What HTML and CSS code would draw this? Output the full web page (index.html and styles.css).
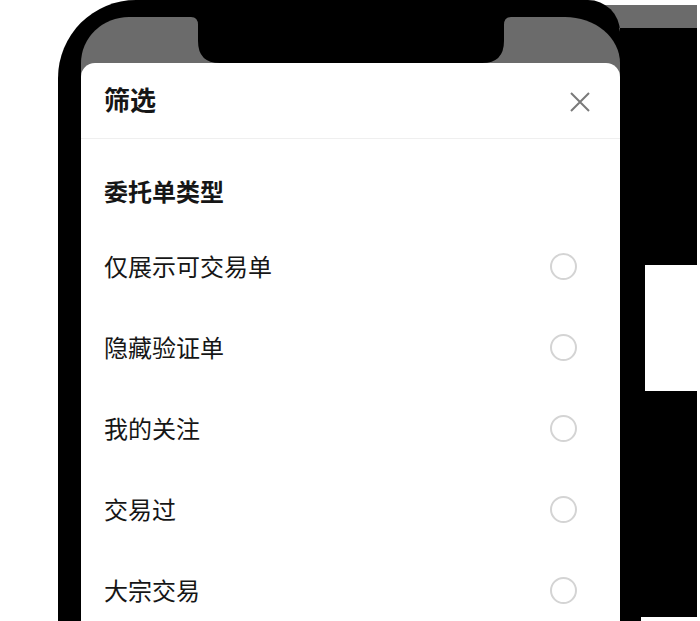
FILE: index.html
```html
<!DOCTYPE html>
<html lang="zh-CN">
<head>
  <meta charset="UTF-8">
  <meta name="viewport" content="width=device-width, initial-scale=1.0">
  <title>筛选</title>
  <link rel="stylesheet" href="styles.css">
</head>
<body>
  <div class="device">
    <div class="phone">
      <div class="screen">
        <div class="status-bar">
          <svg class="notch" width="320" height="46" viewBox="0 0 320 46">
            <path d="M0 0 Q7 0 7 8 V24 Q7 46 29 46 H291 Q313 46 313 24 V8 Q313 0 320 0 Z" fill="#000"/>
          </svg>
        </div>
        <div class="sheet">
          <div class="sheet-header">
            <span class="sheet-title">筛选</span>
            <button type="button" class="close-btn" aria-label="关闭">
              <svg width="20" height="20" viewBox="0 0 20 20">
                <path d="M1 1 L19 19 M19 1 L1 19" stroke="#7a7a7a" stroke-width="2" fill="none"/>
              </svg>
            </button>
          </div>
          <div class="section-title">委托单类型</div>
          <ul class="option-list">
            <li class="option-row"><span>仅展示可交易单</span><span class="radio"></span></li>
            <li class="option-row"><span>隐藏验证单</span><span class="radio"></span></li>
            <li class="option-row"><span>我的关注</span><span class="radio"></span></li>
            <li class="option-row"><span>交易过</span><span class="radio"></span></li>
            <li class="option-row"><span>大宗交易</span><span class="radio"></span></li>
          </ul>
        </div>
      </div>
    </div>
    <div class="side">
      <div class="side-window"></div>
    </div>
  </div>
</body>
</html>
```

FILE: styles.css
```css
html, body {
  margin: 0;
  height: 621px;
  overflow: hidden;
  background: #fff;
}
body {
  font-family: "Noto Sans CJK SC", "Noto Sans", sans-serif;
  color: #161616;
}
.device {
  position: relative;
  display: flex;
  margin-left: 58px;
  width: 639px;
  height: 621px;
}
/* grey strip peeking out behind the top-right corner */
.device::before {
  content: "";
  position: absolute;
  left: 542px;
  top: 5px;
  width: 97px;
  height: 23px;
  background: #6b6b6b;
}
.phone {
  position: relative;
  z-index: 1;
  display: flex;
  width: 562px;
  height: 621px;
  box-sizing: border-box;
  padding: 17px 0 0 23px;
  background: #000;
  border-radius: 78px 32px 0 0;
}
.screen {
  flex: 1;
  display: flex;
  flex-direction: column;
  background: #6b6b6b;
  border-radius: 48px 55px 0 0 / 46px 46px 0 0;
  overflow: hidden;
}
.status-bar {
  height: 46px;
  flex-shrink: 0;
  display: flex;
  justify-content: center;
}
.notch {
  display: block;
}
.sheet {
  flex: 1;
  background: #fff;
  border-radius: 14px 14px 0 0;
}
.sheet-header {
  height: 75px;
  display: flex;
  align-items: center;
  justify-content: space-between;
  padding: 0 30px 0 23px;
  border-bottom: 1px solid #efefef;
}
.sheet-title {
  font-size: 26px;
  font-weight: 700;
  line-height: 30px;
  margin-bottom: 4px;
}
.close-btn {
  border: none;
  background: none;
  padding: 0;
  margin-top: 3px;
  width: 20px;
  height: 20px;
  cursor: pointer;
}
.close-btn svg {
  display: block;
}
.section-title {
  padding: 38px 23px 22px;
  font-size: 24px;
  font-weight: 700;
  line-height: 28px;
}
.option-list {
  list-style: none;
  margin: 0;
  padding: 0;
}
.option-row {
  height: 81px;
  box-sizing: border-box;
  display: flex;
  align-items: center;
  justify-content: space-between;
  padding: 0 43px 4px 23px;
  font-size: 24px;
  line-height: 28px;
}
.radio {
  width: 23px;
  height: 23px;
  border: 2px solid #d4d4d4;
  border-radius: 50%;
  margin-top: 2px;
}
.side {
  position: relative;
  width: 77px;
  margin-top: 28px;
  background: #000;
}
.side-window {
  margin: 237px 0 0 25px;
  height: 126px;
  background: #fff;
}
.side::after {
  content: "";
  position: absolute;
  left: 21px;
  right: 0;
  bottom: 0;
  height: 4px;
  background: #fff;
}
```
